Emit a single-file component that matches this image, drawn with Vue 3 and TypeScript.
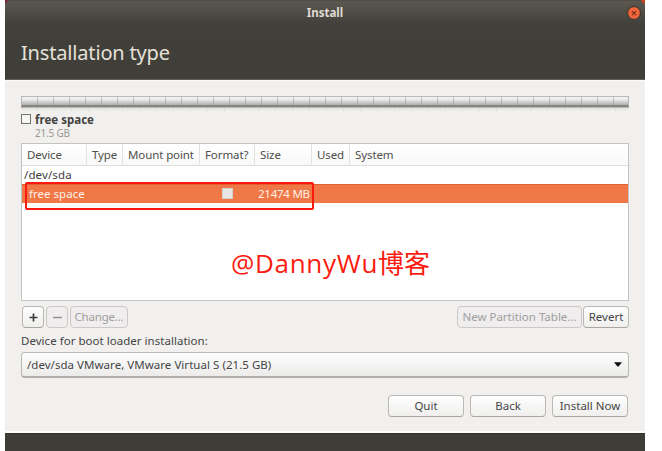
<script setup lang="ts">
interface Column {
  key: string
  label: string
}

const columns: Column[] = [
  { key: 'device', label: 'Device' },
  { key: 'type', label: 'Type' },
  { key: 'mount', label: 'Mount point' },
  { key: 'format', label: 'Format?' },
  { key: 'size', label: 'Size' },
  { key: 'used', label: 'Used' },
  { key: 'system', label: 'System' },
]
</script>

<template>
  <div class="page">
    <main class="window">
      <div class="corner left"></div>
      <div class="corner right"></div>
      <header class="head">
        <div class="titlebar">
          <span class="caption">Install</span>
          <svg class="close" viewBox="0 0 14 14" width="14" height="14">
            <circle cx="7" cy="7" r="6.4" fill="#f0653c" stroke="#343029" stroke-width="1" />
            <path d="M4.9 5.1 9.1 9.1M9.1 5.1 4.9 9.1" stroke="#733219" stroke-width="1.2" fill="none" />
          </svg>
        </div>
        <h1>Installation type</h1>
      </header>

      <section class="content">
        <div class="diskbar"><div class="solid"></div><div class="reflection"></div></div>
        <div class="legend">
          <span class="swatch"></span>
          <div>
            <div class="name">free space</div>
            <div class="amount">21.5 GB</div>
          </div>
        </div>

        <div class="table">
          <div class="row header">
            <span v-for="c in columns" :key="c.key">{{ c.label }}</span>
          </div>
          <div class="row disk"><span>/dev/sda</span></div>
          <div class="row selected">
            <span class="free">free space</span><span></span><span></span>
            <span class="check"><i></i></span>
            <span class="size">21474 MB</span>
          </div>
          <div class="marker"></div>
          <div class="watermark">@DannyWu<b>博客</b></div>
        </div>

        <div class="tools">
          <button class="square"><svg width="9" height="9" viewBox="0 0 9 9"><path d="M4.5 0.5v8M0.5 4.5h8" stroke="#3c3c3c" stroke-width="1.7" /></svg></button>
          <button class="square off"><svg width="9" height="9" viewBox="0 0 9 9"><path d="M0 4.5h9" stroke="#8f8f8c" stroke-width="1.4" /></svg></button>
          <button class="change off">Change...</button>
          <button class="partition off">New Partition Table...</button>
          <button class="revert">Revert</button>
        </div>

        <div class="label">Device for boot loader installation:</div>
        <div class="combo">
          <span>/dev/sda VMware, VMware Virtual S (21.5 GB)</span>
          <svg width="8" height="5" viewBox="0 0 8 5"><path d="M0 0.3h8L4.6 4.6h-1.2z" fill="#111" /></svg>
        </div>

        <div class="actions">
          <button>Quit</button>
          <button>Back</button>
          <button>Install Now</button>
        </div>
      </section>
      <footer></footer>
    </main>
  </div>
</template>

<style>
body { margin: 0; background: #fff; }
</style>

<style scoped>
* { box-sizing: border-box; }
.page {
  width: 662px; height: 451px; padding-left: 5px; overflow: hidden; background: #fff;
  font-family: "Noto Sans", "Noto Sans CJK SC", sans-serif; font-size: 11.5px; color: #454545;
}
.window { position: relative; width: 640px; height: 451px; display: flex; flex-direction: column; background: #f1f0ee; }
.corner { position: absolute; top: 0; width: 4px; height: 4px; }
.corner.left { left: 0; background: linear-gradient(135deg, #7d2540 50%, transparent 50%); }
.corner.right { right: 0; background: linear-gradient(225deg, #c9421d 50%, transparent 50%); }
.head {
  height: 80px; flex: none; border-bottom: 1px solid #605e58;
  background: linear-gradient(#45433d 0, #5a5750 1px, #56534c 6px, #403f3a 25px, #3f3e39 100%);
}
.titlebar { height: 25px; display: flex; align-items: center; justify-content: center; padding-left: 18px; }
.caption { flex: 1; text-align: center; font-weight: 700; font-size: 11.5px; color: #dfdbd2; }
.close { margin-right: 4px; flex: none; }
h1 { margin: 12px 0 0 16px; font-weight: 400; font-size: 20px; line-height: 32px; color: #e6e1d8; letter-spacing: -0.17px; white-space: nowrap; }
.content { height: 353px; flex: none; padding: 15px 16px 0; border-top: 1px solid #fafaf9; border-bottom: 2px solid #fdfdfc; display: flex; flex-direction: column; }
.diskbar { height: 17px; flex: none; width: 608px; }
.solid {
  height: 11px; border: 1px solid #b4b4b2; border-top-color: #b8b8b6; border-bottom: 2px solid #858583;
  background:
    repeating-linear-gradient(90deg, transparent 0 15px, rgba(120,120,118,.4) 15px 16px),
    linear-gradient(#f4f4f4 0, #e9e9e9 35%, #d0d0d0 60%, #b0b0b0 100%);
}
.reflection {
  height: 6px;
  background:
    linear-gradient(#a5a5a3 0, rgba(220,219,217,.6) 1.5px, rgba(241,240,238,0) 4px),
    linear-gradient(rgba(241,240,238,0), #f1f0ee),
    repeating-linear-gradient(90deg, transparent 0 16px, #d6d6d4 16px 17px);
}
.legend { height: 30px; flex: none; display: flex; gap: 4px; white-space: nowrap; }
.swatch { width: 10px; height: 10px; margin-top: 1px; border: 1px solid #72726e; background: #f6f6f5; }
.name { font-weight: 700; font-size: 11.5px; line-height: 14px; color: #434340; letter-spacing: .02px; }
.amount { font-size: 10px; line-height: 12px; color: #999895; letter-spacing: -.2px; }
.table { position: relative; width: 608px; height: 158px; flex: none; border: 1px solid #c3c3c1; background: #fff; }
.row { display: grid; grid-template-columns: 65px 36px 77px 55px 57px 38px 1fr; white-space: nowrap; }
.header { height: 22px; border-bottom: 1px solid #dededc; background: linear-gradient(#fff, #f9f9f9); line-height: 22px; color: #4f4f4b; letter-spacing: -.1px; }
.header span { padding-left: 5px; border-right: 1px solid #e2e2e0; }
.header span:last-child { border-right: 0; }
.disk { height: 18px; line-height: 18px; padding-left: 2px; color: #404040; letter-spacing: .12px; }
.selected { height: 19px; line-height: 18px; background: #f07746; border-top: 1px solid #e2602f; color: #fff2e9; }
.free { padding-left: 7px; letter-spacing: .02px; }
.check i { display: block; width: 11px; height: 11px; margin: 3px 0 0 22px; border: 1px solid #d4d0cb; background: #e8e6e4; }
.size { padding-left: 3px; letter-spacing: -.25px; }
.marker { position: absolute; left: 3px; top: 38px; width: 289px; height: 28px; border: 2px solid #fa190e; border-radius: 2px; }
.watermark { position: absolute; left: 209px; top: 101px; font-family: "Open Sans", "Noto Sans CJK SC", sans-serif; font-size: 26px; line-height: 36px; color: #fa1c10; letter-spacing: .7px; white-space: nowrap; }
.watermark b { font-weight: 400; letter-spacing: 0; }
button {
  height: 22px; padding: 0; border: 1px solid #b9b8b5; border-bottom-color: #a7a6a3; border-radius: 4px;
  background: linear-gradient(#fefefe, #f0efee); font: inherit; color: #454545; line-height: 18px; white-space: nowrap;
  display: flex; align-items: center; justify-content: center;
}
.off { color: #a09f9c; background: #efedee; border-color: #cac9c6; }
.tools { display: flex; margin-top: 5px; padding-left: 1px; width: 608px; flex: none; }
.square { width: 22px; margin-right: 2px; }
.change { width: 58px; letter-spacing: -.2px; }
.partition { width: 125px; margin-left: auto; margin-right: 1px; }
.revert { width: 46px; }
.label { margin-top: 5px; height: 15px; line-height: 15px; white-space: nowrap; letter-spacing: .03px; }
.combo { margin-top: 4px; height: 26px; flex: none; border: 1px solid #b9b8b5; border-bottom: 2px solid #b0afac; border-radius: 4px; background: linear-gradient(#fefefe, #ecebea); display: flex; justify-content: space-between; align-items: center; padding: 0 6px 0 5px; white-space: nowrap; letter-spacing: .04px; }
.actions { margin-top: 17px; padding-right: 1px; display: flex; justify-content: flex-end; gap: 6px; }
.actions button { width: 76px; }
footer { height: 18px; flex: none; background: #3e3d38; border-top: 1px solid #33322e; }
</style>
